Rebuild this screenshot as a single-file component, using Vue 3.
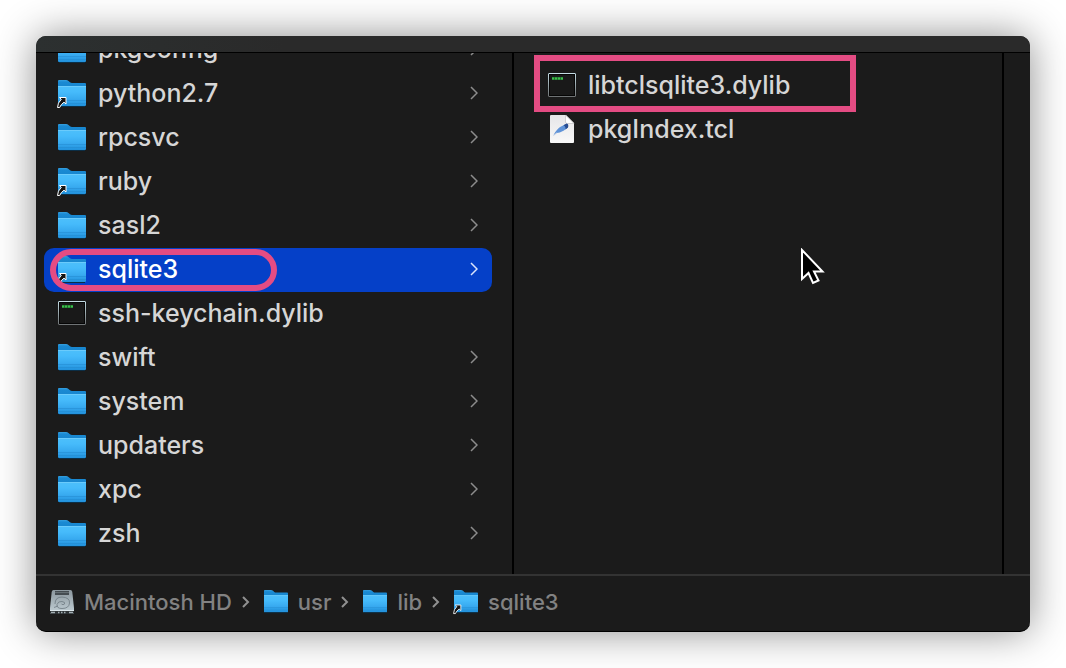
<script setup>
import { ref } from 'vue'

const entries = [
  { name: 'pkgconfig', kind: 'folder' },
  { name: 'python2.7', kind: 'folder', alias: true },
  { name: 'rpcsvc', kind: 'folder' },
  { name: 'ruby', kind: 'folder', alias: true },
  { name: 'sasl2', kind: 'folder' },
  { name: 'sqlite3', kind: 'folder', alias: true, marked: true },
  { name: 'ssh-keychain.dylib', kind: 'exec' },
  { name: 'swift', kind: 'folder' },
  { name: 'system', kind: 'folder' },
  { name: 'updaters', kind: 'folder' },
  { name: 'xpc', kind: 'folder' },
  { name: 'zsh', kind: 'folder' },
]
const files = [
  { name: 'libtclsqlite3.dylib', kind: 'exec', marked: true },
  { name: 'pkgIndex.tcl', kind: 'doc' },
]
const path = [
  { name: 'Macintosh HD', icon: 'disk' },
  { name: 'usr', icon: 'folder' },
  { name: 'lib', icon: 'folder' },
  { name: 'sqlite3', icon: 'alias' },
]
const selected = ref('sqlite3')
const iconOf = (e) => (e.alias ? 'alias' : e.kind)
</script>

<template>
  <svg class="defs" aria-hidden="true">
    <defs>
      <linearGradient id="front" x1="0" y1="0" x2="0" y2="1">
        <stop offset="0" stop-color="#4dbffb" />
        <stop offset=".3" stop-color="#46bbfb" />
        <stop offset=".65" stop-color="#38aaf0" />
        <stop offset="1" stop-color="#2191dc" />
      </linearGradient>
      <linearGradient id="back" x1="0" y1="0" x2="0" y2="1">
        <stop offset="0" stop-color="#37a0df" />
        <stop offset=".2" stop-color="#1a8ad3" />
        <stop offset="1" stop-color="#1583cb" />
      </linearGradient>
      <linearGradient id="rim" x1="0" y1="0" x2="0" y2="1">
        <stop offset="0" stop-color="#c3dbe3" />
        <stop offset="1" stop-color="#6f7375" />
      </linearGradient>
      <linearGradient id="paper" x1="0" y1="0" x2="0" y2="1">
        <stop offset="0" stop-color="#e6e6e8" />
        <stop offset="1" stop-color="#f8f8f8" />
      </linearGradient>
      <linearGradient id="metal" x1="0" y1="0" x2="0" y2="1">
        <stop offset="0" stop-color="#8c979e" />
        <stop offset="1" stop-color="#c3d1d7" />
      </linearGradient>
      <symbol id="folder" viewBox="0 0 28 28">
        <path d="M0 1Q0 0 1 0H8Q9.500 0 10.500 1L12 2.300Q12.800 3 14 3H27Q28 3 28 4V10H0Z" fill="url(#back)" />
        <path d="M0 6H28V25Q28 26 27 26H1Q0 26 0 25Z" fill="url(#front)" />
        <path d="M0 6.500H28" stroke="#6acbfc" stroke-width="1" />
        <path d="M0 20.500H28M0 23.500H28" stroke="#2389cf" stroke-width="1" opacity=".5" />
        <path d="M1 26.500H27" stroke="#0b2e46" stroke-width="1" />
      </symbol>
      <symbol id="alias" viewBox="0 0 28 28" overflow="visible">
        <use href="#folder" width="28" height="28" />
        <path d="M1.500 17.500H8V24L6 22.200Q2.700 24.500 1.700 27.500H-.5Q-.5 23 3.300 19.300Z" fill="#151515" stroke="#fff" stroke-width="1" />
      </symbol>
      <symbol id="exec" viewBox="0 0 28 28">
        <rect x=".5" y="1.500" width="27" height="23" rx=".5" fill="#191919" stroke="url(#rim)" />
        <rect x="1.500" y="2.500" width="25" height="21" fill="none" stroke="#050505" />
        <path d="M4 6.500H15" stroke="#1f6e2b" stroke-width="3" />
        <path d="M4 6.500H15" stroke="#3fbf4e" stroke-width="2" stroke-dasharray="2 1" />
      </symbol>
      <symbol id="doc" viewBox="0 0 28 28" overflow="visible">
        <path d="M3 -1H18L26 7V26Q26 27 25 27H3Q2 27 2 26V0Q2 -1 3 -1Z" fill="url(#paper)" />
        <path d="M17.500 -1L26 7.500H19Q17.500 7.500 17.500 6Z" fill="#fff" stroke="#b8b8bc" stroke-width=".6" />
        <path d="M5.500 19Q9 12.500 13 10.500L18.500 7.700Q20.500 8 20 11.500L15.500 14.800Q11.500 17 8.500 17Z" fill="#5f93d8" />
        <path d="M15.500 9.200L18.700 7.500Q21 8.200 20 11.600L17.500 13.500Q18 10.500 15.500 9.200Z" fill="#274c91" />
        <path d="M5.500 19.500L9 16.500" stroke="#a9bfdf" stroke-width=".8" />
      </symbol>
      <symbol id="disk" viewBox="0 0 24 24">
        <path d="M3.500 0H20.500Q22 0 22.300 2L24 18V23Q24 24 23 24H1Q0 24 0 23V18L1.700 2Q2 0 3.500 0Z" fill="url(#metal)" />
        <path d="M5 1H19V5H5Z" fill="#454c51" />
        <path d="M5 2.500H19" stroke="#737d83" stroke-width=".7" />
        <path d="M4 17.500L8 16M5 14Q5 7 12 7Q20 7.500 19.500 13Q19 18.500 12 18.500Q6.500 18.500 7 14.500Q8 11 12 11.500Q15.500 12 14.500 14Q13 15.500 11.500 14" fill="none" stroke="#6d7a82" stroke-width=".8" />
        <path d="M0 21H24V23Q24 24 23 24H1Q0 24 0 23Z" fill="#2d3235" />
        <path d="M1 22.500H5M19 22.500H23M8 22.500H9.500M11 22.500H12.500M14 22.500H15.500" stroke="#a5b0b5" stroke-width="1.500" />
        <path d="M0 20.500H24" stroke="#dce7eb" stroke-width="1" />
      </symbol>
    </defs>
  </svg>
  <main class="window">
    <header class="titlebar"></header>
    <div class="columns">
      <section class="column first" aria-label="lib">
        <button
          v-for="e in entries"
          :key="e.name"
          type="button"
          class="row"
          :class="{ selected: selected === e.name }"
          @click="selected = e.name"
        >
          <svg class="icon" aria-hidden="true"><use :href="'#' + iconOf(e)" /></svg>
          <span class="name">{{ e.name }}</span>
          <svg v-if="e.kind === 'folder'" class="chevron" viewBox="0 0 8 14" aria-hidden="true">
            <path d="M1 1L7 7L1 13" />
          </svg>
          <span v-if="e.marked" class="mark pill"></span>
        </button>
      </section>
      <section class="column second" aria-label="sqlite3">
        <button v-for="f in files" :key="f.name" type="button" class="row">
          <svg class="icon" aria-hidden="true"><use :href="'#' + f.kind" /></svg>
          <span class="name">{{ f.name }}</span>
          <span v-if="f.marked" class="mark box"></span>
        </button>
      </section>
      <section class="column third"></section>
    </div>
    <nav class="pathbar" aria-label="Path">
      <template v-for="(p, i) in path" :key="p.name">
        <svg v-if="i" class="sep" viewBox="0 0 8 12" aria-hidden="true"><path d="M1 1L6 6L1 11" /></svg>
        <a href="#" class="crumb" @click.prevent>
          <svg class="small-icon" aria-hidden="true"><use :href="'#' + p.icon" /></svg>
          <span>{{ p.name }}</span>
        </a>
      </template>
    </nav>
    <svg class="cursor" viewBox="0 0 26 38" aria-hidden="true">
      <path d="M2 2V31L8.500 25L13 35L18.500 32.500L14 23.500H22.500Z" />
    </svg>
  </main>
</template>

<style>
body {
  background: #fff;
}
</style>

<style scoped>
.defs {
  position: absolute;
  width: 0;
  height: 0;
}
.window {
  position: relative;
  box-sizing: border-box;
  display: flex;
  flex-direction: column;
  min-height: calc(100vh - 72px);
  margin: 36px;
  overflow: hidden;
  border-bottom: 1px solid #000;
  border-radius: 10px;
  background: #1b1b1b;
  box-shadow: 0 0 40px rgba(0, 0, 0, 0.45);
  font-family: Inter, "Liberation Sans", sans-serif;
}
.titlebar {
  height: 16px;
  border-bottom: 1px solid #000;
  background: linear-gradient(90deg, #2c3030, #2a2a2a 25%);
}
.columns {
  flex: 1;
  display: grid;
  grid-template-columns: 478fr 490fr 26fr;
  overflow: hidden;
}
.column {
  border-right: 2px solid #000;
}
.third {
  border-right: 0;
}
.first {
  padding: 0 20px 16px 8px;
}
.first .row:first-child {
  margin-top: -25px;
}
.second {
  padding: 11px 20px 0;
}
.row {
  position: relative;
  display: flex;
  align-items: center;
  gap: 12px;
  width: 100%;
  height: 44px;
  padding: 0 14px;
  border: 0;
  border-radius: 10px;
  background: none;
  color: #d6d6d6;
  font: 500 25px/32px Inter, "Liberation Sans", sans-serif;
  text-align: left;
}
.row.selected {
  background: #0540c8;
  color: #fff;
}
.icon {
  flex: none;
  width: 28px;
  height: 28px;
  overflow: visible;
}
.name {
  flex: 1;
  padding-bottom: 2px;
  white-space: nowrap;
}
.chevron {
  width: 8px;
  height: 14px;
  padding-bottom: 2px;
  fill: none;
  stroke: #8c8c8c;
  stroke-width: 1.5;
}
.selected .chevron {
  stroke: #dbe4fb;
}
.mark {
  position: absolute;
  box-sizing: border-box;
  border: 6px solid #e44c83;
}
.pill {
  top: 1px;
  left: 6px;
  width: 227px;
  height: 42px;
  border-radius: 21px;
}
.box {
  top: -9px;
  left: 0;
  width: 322px;
  height: 57px;
}
.pathbar {
  box-sizing: border-box;
  display: flex;
  align-items: center;
  height: 57px;
  padding: 0 14px 4px;
  border-top: 2px solid #333;
  color: #828282;
  font-size: 22px;
  font-weight: 500;
  line-height: 28px;
}
.crumb {
  display: flex;
  align-items: center;
  gap: 10px;
  color: inherit;
  text-decoration: none;
  white-space: nowrap;
}
.small-icon {
  width: 24px;
  height: 24px;
  overflow: visible;
}
.sep {
  width: 8px;
  height: 12px;
  margin: 0 14px 0 10px;
  fill: none;
  stroke: #909090;
  stroke-width: 2;
}
.second .row {
  padding-right: 0;
}
.cursor {
  position: absolute;
  top: 212px;
  left: 764px;
  width: 26px;
  height: 38px;
  fill: #000;
  stroke: #fff;
  stroke-width: 2;
}
</style>
